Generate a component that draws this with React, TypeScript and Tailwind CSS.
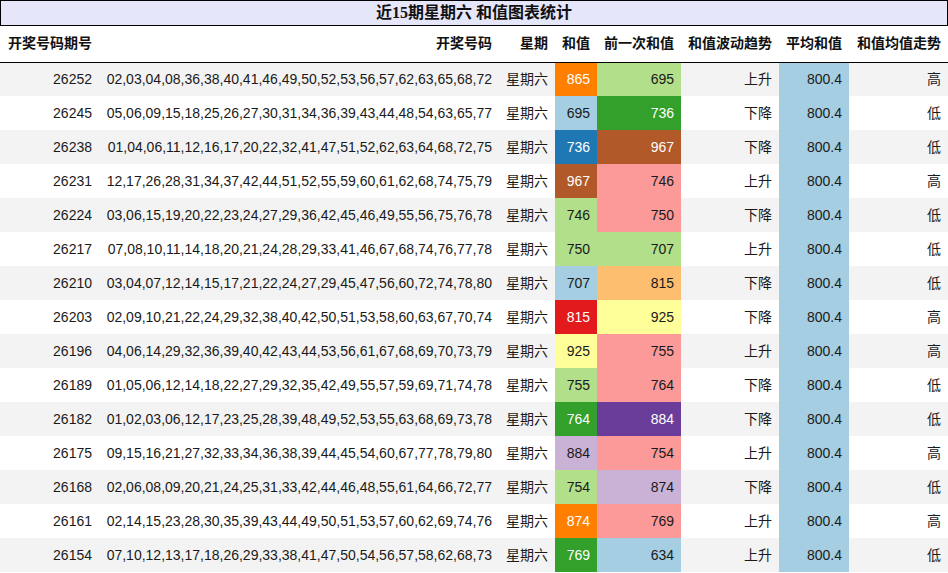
const rows: [string, string, number, number, string, string][] = [
  ["26252", "02,03,04,08,36,38,40,41,46,49,50,52,53,56,57,62,63,65,68,72", 865, 695, "上升", "高"],
  ["26245", "05,06,09,15,18,25,26,27,30,31,34,36,39,43,44,48,54,63,65,77", 695, 736, "下降", "低"],
  ["26238", "01,04,06,11,12,16,17,20,22,32,41,47,51,52,62,63,64,68,72,75", 736, 967, "下降", "低"],
  ["26231", "12,17,26,28,31,34,37,42,44,51,52,55,59,60,61,62,68,74,75,79", 967, 746, "上升", "高"],
  ["26224", "03,06,15,19,20,22,23,24,27,29,36,42,45,46,49,55,56,75,76,78", 746, 750, "下降", "低"],
  ["26217", "07,08,10,11,14,18,20,21,24,28,29,33,41,46,67,68,74,76,77,78", 750, 707, "上升", "低"],
  ["26210", "03,04,07,12,14,15,17,21,22,24,27,29,45,47,56,60,72,74,78,80", 707, 815, "下降", "低"],
  ["26203", "02,09,10,21,22,24,29,32,38,40,42,50,51,53,58,60,63,67,70,74", 815, 925, "下降", "高"],
  ["26196", "04,06,14,29,32,36,39,40,42,43,44,53,56,61,67,68,69,70,73,79", 925, 755, "上升", "高"],
  ["26189", "01,05,06,12,14,18,22,27,29,32,35,42,49,55,57,59,69,71,74,78", 755, 764, "下降", "低"],
  ["26182", "01,02,03,06,12,17,23,25,28,39,48,49,52,53,55,63,68,69,73,78", 764, 884, "下降", "低"],
  ["26175", "09,15,16,21,27,32,33,34,36,38,39,44,45,54,60,67,77,78,79,80", 884, 754, "上升", "高"],
  ["26168", "02,06,08,09,20,21,24,25,31,33,42,44,46,48,55,61,64,66,72,77", 754, 874, "下降", "低"],
  ["26161", "02,14,15,23,28,30,35,39,43,44,49,50,51,53,57,60,62,69,74,76", 874, 769, "上升", "高"],
  ["26154", "07,10,12,13,17,18,26,29,33,38,41,47,50,54,56,57,58,62,68,73", 769, 634, "上升", "低"],
];

// colour of a sum cell, by value
const swatch: Record<number, string> = {
  865: "bg-[#ff7f00] text-white",
  695: "bg-[#a6cee3]",
  736: "bg-[#1f78b4] text-white",
  967: "bg-[#b15928] text-white",
  746: "bg-[#b2df8a]",
  750: "bg-[#b2df8a]",
  707: "bg-[#a6cee3]",
  815: "bg-[#e31a1c] text-white",
  925: "bg-[#ffff99]",
  755: "bg-[#b2df8a]",
  764: "bg-[#33a02c] text-white",
  884: "bg-[#cab2d6]",
  754: "bg-[#b2df8a]",
  874: "bg-[#ff7f00] text-white",
  769: "bg-[#33a02c] text-white",
};

const prevSwatch: Record<number, string> = {
  695: "bg-[#b2df8a]",
  736: "bg-[#33a02c] text-white",
  967: "bg-[#b15928] text-white",
  746: "bg-[#fb9a99]",
  750: "bg-[#fb9a99]",
  707: "bg-[#b2df8a]",
  815: "bg-[#fdbf6f]",
  925: "bg-[#ffff99]",
  755: "bg-[#fb9a99]",
  764: "bg-[#fb9a99]",
  884: "bg-[#6a3d9a] text-white",
  754: "bg-[#fb9a99]",
  874: "bg-[#cab2d6]",
  769: "bg-[#fb9a99]",
  634: "bg-[#a6cee3]",
};

const headers = ["开奖号码期号", "开奖号码", "星期", "和值", "前一次和值", "和值波动趋势", "平均和值", "和值均值走势"];

export default function App() {
  return (
    <div className="w-[948px] h-[573px] overflow-hidden bg-white text-[14px] text-[#1a1a1a] [font-family:'Liberation_Sans','Noto_Sans_CJK_SC',sans-serif]">
      <div className="h-[26px] border border-black bg-[#e6e6fa] text-center text-[16px] font-bold leading-[24px] text-[#111] [font-family:'Liberation_Serif','Noto_Sans_CJK_SC',serif]">
        近15期星期六 和值图表统计
      </div>
      <table className="w-full table-fixed border-collapse">
        <colgroup>
          <col className="w-[99px]" />
          <col className="w-[400px]" />
          <col className="w-[56px]" />
          <col className="w-[42px]" />
          <col className="w-[84px]" />
          <col className="w-[98px]" />
          <col className="w-[70px]" />
          <col className="w-[99px]" />
        </colgroup>
        <thead>
          <tr className="h-[36px] border-b border-black">
            {headers.map((h) => (
              <th key={h} className="px-[7px] text-right font-bold whitespace-nowrap text-[#111]">
                {h}
              </th>
            ))}
          </tr>
        </thead>
        <tbody>
          {rows.map(([issue, nums, sum, prev, trend, avgTrend], i) => (
            <tr key={issue} className={`h-[34px] ${i % 2 === 0 ? "bg-[#f3f3f3]" : "bg-white"}`}>
              <td className="px-[7px] text-right">{issue}</td>
              <td className="px-[7px] text-right whitespace-nowrap">{nums}</td>
              <td className="px-[7px] text-right">星期六</td>
              <td className={`px-[7px] text-right ${swatch[sum]}`}>{sum}</td>
              <td className={`px-[7px] text-right ${prevSwatch[prev]}`}>{prev}</td>
              <td className="px-[7px] text-right">{trend}</td>
              <td className="px-[7px] text-right bg-[#a6cee3]">800.4</td>
              <td className="px-[7px] text-right">{avgTrend}</td>
            </tr>
          ))}
        </tbody>
      </table>
    </div>
  );
}
